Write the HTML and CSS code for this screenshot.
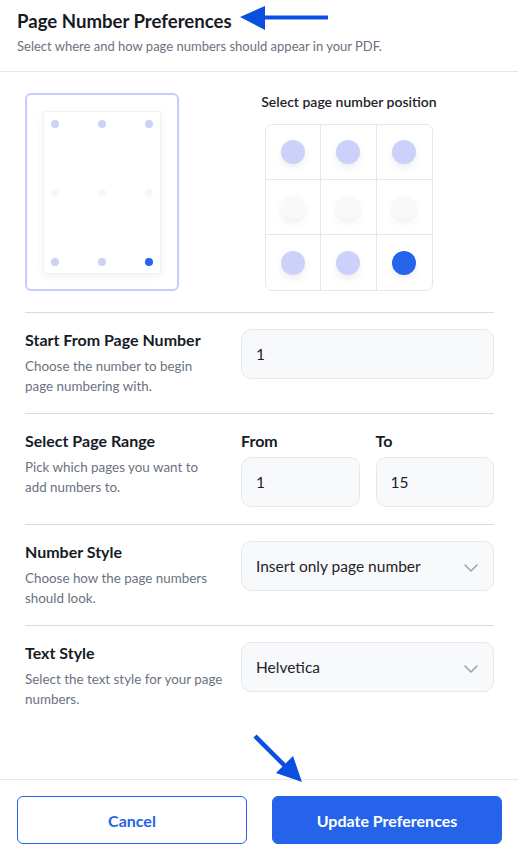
FILE: index.html
```html
<!DOCTYPE html>
<html lang="en">
<head>
    <meta charset="UTF-8">
    <meta name="viewport" content="width=device-width, initial-scale=1.0">
    <title>Page Number Preferences</title>
    <link rel="stylesheet" href="styles.css">
</head>
<body>
    <header class="header">
        <h1 class="title">Page Number Preferences</h1>
        <p class="subtitle">Select where and how page numbers should appear in your PDF.</p>
    </header>

    <main class="content">
        <section class="position">
            <div class="preview">
                <div class="page">
                    <div class="dot-row">
                        <span class="dot"></span><span class="dot"></span><span class="dot"></span>
                    </div>
                    <div class="dot-row">
                        <span class="dot off"></span><span class="dot off"></span><span class="dot off"></span>
                    </div>
                    <div class="dot-row">
                        <span class="dot"></span><span class="dot"></span><span class="dot active"></span>
                    </div>
                </div>
            </div>
            <div class="picker">
                <p class="picker-title">Select page number position</p>
                <div class="grid">
                    <button class="cell"><span class="circle"></span></button>
                    <button class="cell"><span class="circle"></span></button>
                    <button class="cell"><span class="circle"></span></button>
                    <button class="cell"><span class="circle off"></span></button>
                    <button class="cell"><span class="circle off"></span></button>
                    <button class="cell"><span class="circle off"></span></button>
                    <button class="cell"><span class="circle"></span></button>
                    <button class="cell"><span class="circle"></span></button>
                    <button class="cell"><span class="circle active"></span></button>
                </div>
            </div>
        </section>

        <div class="row">
            <div class="label">
                <h2>Start From Page Number</h2>
                <p>Choose the number to begin<br>page numbering with.</p>
            </div>
            <div class="field">
                <input class="input" type="text" value="1">
            </div>
        </div>

        <div class="row">
            <div class="label">
                <h2>Select Page Range</h2>
                <p>Pick which pages you want to<br>add numbers to.</p>
            </div>
            <div class="field range">
                <div>
                    <span class="small-label">From</span>
                    <input class="input" type="text" value="1">
                </div>
                <div>
                    <span class="small-label">To</span>
                    <input class="input" type="text" value="15">
                </div>
            </div>
        </div>

        <div class="row">
            <div class="label">
                <h2>Number Style</h2>
                <p>Choose how the page numbers<br>should look.</p>
            </div>
            <div class="field">
                <div class="select">
                    <span>Insert only page number</span>
                    <svg class="chevron" width="16" height="10" viewBox="0 0 16 10"><path d="M2 2l6 6 6-6" fill="none" stroke="#9ca3af" stroke-width="1.6" stroke-linecap="round" stroke-linejoin="round"/></svg>
                </div>
            </div>
        </div>

        <div class="row">
            <div class="label">
                <h2>Text Style</h2>
                <p>Select the text style for your page<br>numbers.</p>
            </div>
            <div class="field">
                <div class="select">
                    <span>Helvetica</span>
                    <svg class="chevron" width="16" height="10" viewBox="0 0 16 10"><path d="M2 2l6 6 6-6" fill="none" stroke="#9ca3af" stroke-width="1.6" stroke-linecap="round" stroke-linejoin="round"/></svg>
                </div>
            </div>
        </div>
    </main>

    <footer class="footer">
        <button class="btn btn-cancel">Cancel</button>
        <button class="btn btn-primary">Update Preferences</button>
    </footer>

    <!-- annotation arrows -->
    <svg class="arrow arrow-top" width="100" height="30" viewBox="0 0 100 30">
        <polygon points="0,11 25,0 25,24" fill="#0a4fdf"/>
        <rect x="22" y="9.5" width="66" height="4" fill="#0a4fdf"/>
    </svg>
    <svg class="arrow arrow-bottom" width="60" height="60" viewBox="0 0 60 60">
        <line x1="4" y1="4" x2="34" y2="34" stroke="#0a4fdf" stroke-width="4.5"/>
        <polygon points="25,41 42,24 51,50" fill="#0a4fdf"/>
    </svg>
</body>
</html>
```

FILE: styles.css
```css
body {
    font-family: Lato, "Open Sans", sans-serif;
    background-color: #fff;
    color: #111827;
    margin: 0;
    padding: 0;
    min-height: 100vh;
    display: flex;
    flex-direction: column;
    position: relative;
}

.header {
    padding: 9px 17px 16px;
    border-bottom: 1px solid #e5e7eb;
}

.title {
    font-size: 18.6px;
    font-weight: 700;
    margin: 0;
    line-height: 24px;
    color: #161b26;
}

.subtitle {
    font-size: 13px;
    color: #6b7280;
    margin: 4px 0 0;
    line-height: 18px;
}

.content {
    padding: 0 24px 0 25px;
}

/* position picker */
.position {
    display: flex;
    gap: 25px;
    padding: 21px 0 21px;
    border-bottom: 1px solid #d9dbe0;
}

.preview {
    width: 150px;
    height: 194px;
    border: 2px solid #c7cdfa;
    border-radius: 6px;
    display: flex;
    align-items: center;
    justify-content: center;
}

.page {
    width: 118px;
    height: 163px;
    background-color: #fff;
    border: 1px solid #f0f1f3;
    box-shadow: 0 2px 8px rgba(0, 0, 0, 0.06);
    display: flex;
    flex-direction: column;
    justify-content: space-between;
    padding: 8px 7px 7px;
    box-sizing: border-box;
}

.dot-row {
    display: flex;
    justify-content: space-between;
}

.dot {
    width: 8px;
    height: 8px;
    border-radius: 50%;
    background-color: #cbd1fb;
}

.dot.off {
    background-color: #f6f7f9;
}

.dot.active {
    background-color: #2563eb;
}

.picker {
    flex: 1;
    display: flex;
    flex-direction: column;
    align-items: center;
}

.picker-title {
    font-size: 14px;
    font-weight: 600;
    margin: 0 0 13px;
    line-height: 18px;
    color: #1f2329;
}

.grid {
    width: 168px;
    height: 167px;
    border: 1px solid #e6e7eb;
    border-radius: 7px;
    display: grid;
    grid-template-columns: repeat(3, 1fr);
    grid-template-rows: repeat(3, 1fr);
    overflow: hidden;
    box-sizing: border-box;
}

.cell {
    background: #fff;
    border: none;
    border-right: 1px solid #e6e7eb;
    border-bottom: 1px solid #e6e7eb;
    padding: 0;
    display: flex;
    align-items: center;
    justify-content: center;
    cursor: pointer;
}

.cell:nth-child(3n) {
    border-right: none;
}

.cell:nth-child(n+7) {
    border-bottom: none;
}

.circle {
    width: 24px;
    height: 24px;
    border-radius: 50%;
    background-color: #cbd1fb;
    box-shadow: 0 4px 7px rgba(0, 0, 0, 0.07);
}

.circle.off {
    background-color: #f8f9fb;
}

.circle.active {
    background-color: #2563eb;
}

/* form rows */
.row {
    display: grid;
    grid-template-columns: 1fr 253px;
    gap: 16px;
    padding: 16px 0 17px;
    border-bottom: 1px solid #d9dbe0;
}

.row:last-child {
    border-bottom: none;
}

.label h2 {
    font-size: 16px;
    font-weight: 700;
    margin: 0;
    line-height: 22px;
    color: #161b26;
}

.label p {
    font-size: 13.4px;
    color: #6b7280;
    margin: 5px 0 0;
    line-height: 20px;
}

.input,
.select {
    width: 100%;
    height: 50px;
    box-sizing: border-box;
    background-color: #f8f9fb;
    border: 1px solid #e5e7eb;
    border-radius: 10px;
    padding: 0 14px;
    font-family: inherit;
    font-size: 15.5px;
    color: #1f2329;
}

.select {
    display: flex;
    align-items: center;
    justify-content: space-between;
    padding-right: 14px;
}

.chevron {
    margin-top: 4px;
}

.range {
    display: grid;
    grid-template-columns: 1fr 1fr;
    gap: 16px;
}

.small-label {
    display: block;
    font-size: 16px;
    font-weight: 700;
    line-height: 22px;
    margin-bottom: 5px;
    color: #161b26;
}

/* footer */
.footer {
    margin-top: auto;
    border-top: 1px solid #e5e7eb;
    padding: 16px 16px 8px 17px;
    display: flex;
    gap: 25px;
}

.btn {
    flex: 1;
    height: 48px;
    border-radius: 6px;
    font-family: inherit;
    font-size: 16px;
    font-weight: 700;
    cursor: pointer;
}

.btn-cancel {
    background-color: #fff;
    border: 1px solid #2563eb;
    color: #2563eb;
}

.btn-primary {
    background-color: #2563eb;
    border: 1px solid #2563eb;
    color: #fff;
}

.arrow {
    position: absolute;
}

.arrow-top {
    left: 240px;
    top: 6px;
}

.arrow-bottom {
    left: 251px;
    top: 732px;
}
```
